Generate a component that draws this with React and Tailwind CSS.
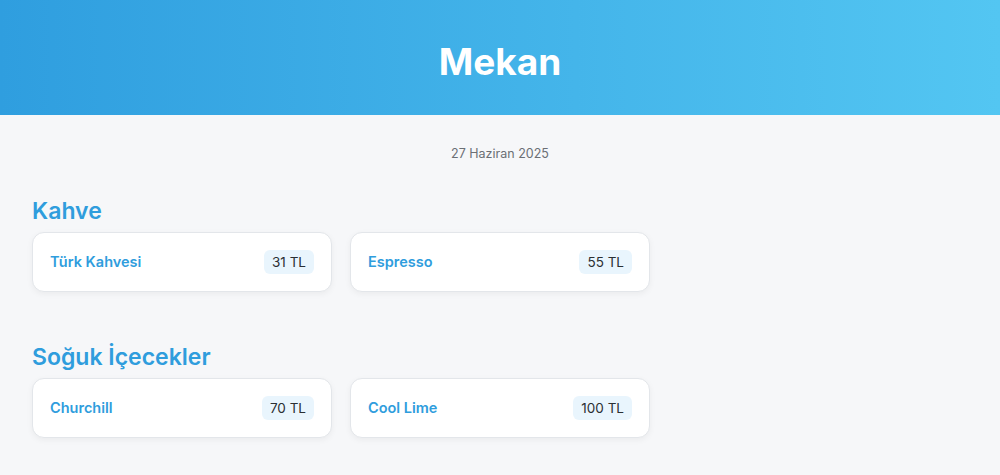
const SECTIONS = [
  {
    title: 'Kahve',
    items: [
      { name: 'Türk Kahvesi', price: '31 TL' },
      { name: 'Espresso', price: '55 TL' },
    ],
  },
  {
    title: 'Soğuk İçecekler',
    items: [
      { name: 'Churchill', price: '70 TL' },
      { name: 'Cool Lime', price: '100 TL' },
    ],
  },
]

function MenuCard({ item }) {
  return (
    <div className="bg-white rounded-xl border border-[#e3e6ea] shadow-[0_2px_6px_rgba(0,0,0,0.05)] px-[17px] py-[17px] flex items-center justify-between">
      <span className="text-[14.5px] font-semibold text-[#2f9ddd]">{item.name}</span>
      <span className="h-6 inline-flex items-center bg-[#e9f5fd] text-[#2b2f33] text-[13.5px] px-[8px] rounded-md">{item.price}</span>
    </div>
  )
}

export default function App() {
  return (
    <div className="min-h-[475px] bg-[#f6f7f9] font-['Inter',sans-serif]">
      <header className="h-[115px] pt-[9px] flex items-center justify-center bg-gradient-to-r from-[#2f9edf] to-[#53c6f2]">
        <h1 className="text-[37px] font-bold text-white">Mekan</h1>
      </header>

      <main className="px-8 pt-[29px] pb-8">
        <p className="text-center text-[12.5px] leading-5 text-[#6b6f75]">27 Haziran 2025</p>

        {SECTIONS.map((section, i) => (
          <section key={section.title} className={i === 0 ? 'mt-[31px]' : 'mt-[49px]'}>
            <h2 className="text-[23px] leading-8 font-semibold text-[#2f9ddd] mb-[5px]">{section.title}</h2>
            <div className="grid grid-cols-3 gap-[18px]">
              {section.items.map(item => <MenuCard key={item.name} item={item} />)}
            </div>
          </section>
        ))}
      </main>
    </div>
  )
}
